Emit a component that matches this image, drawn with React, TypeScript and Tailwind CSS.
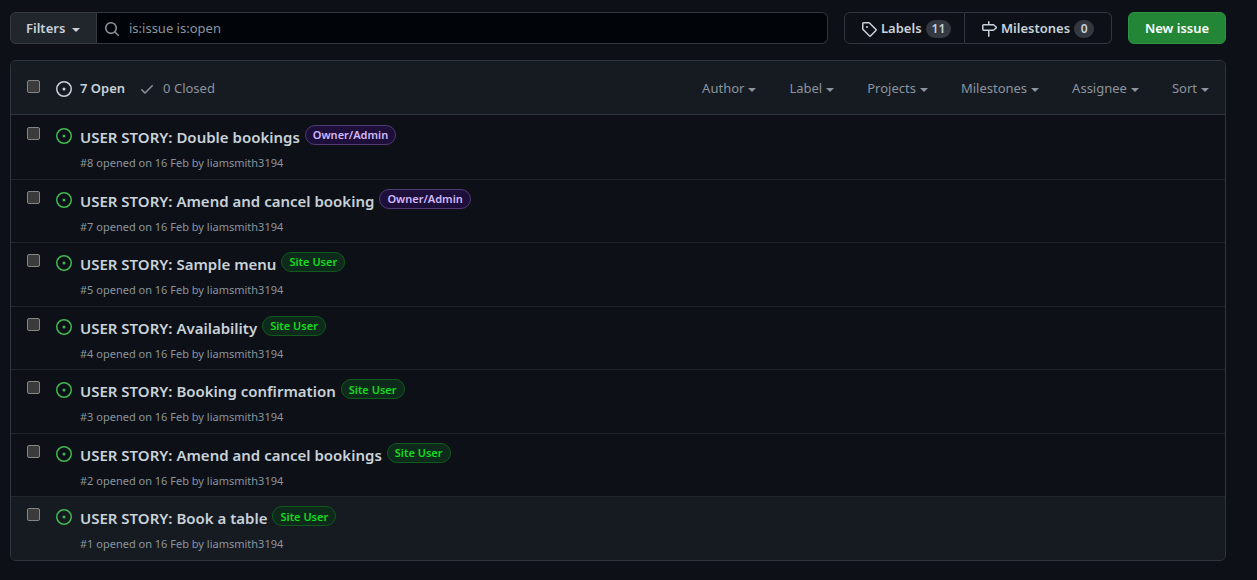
import type { ReactNode } from "react";

const paths = {
  open: "M8 9.5a1.5 1.5 0 100-3 1.5 1.5 0 000 3zM8 0a8 8 0 100 16A8 8 0 008 0zM1.5 8a6.5 6.5 0 1113 0 6.5 6.5 0 01-13 0z",
  search:
    "M11.5 7a4.499 4.499 0 11-8.998 0A4.499 4.499 0 0111.5 7zm-.82 4.74a6 6 0 111.06-1.06l3.04 3.04a.75.75 0 11-1.06 1.06l-3.04-3.04z",
  tag: "M2.5 7.775V2.75a.25.25 0 01.25-.25h5.025a.25.25 0 01.177.073l6.25 6.25a.25.25 0 010 .354l-5.025 5.025a.25.25 0 01-.354 0l-6.25-6.25a.25.25 0 01-.073-.177zm-1.5 0V2.75C1 1.784 1.784 1 2.75 1h5.025c.464 0 .91.184 1.238.513l6.25 6.25a1.75 1.75 0 010 2.474l-5.026 5.026a1.75 1.75 0 01-2.474 0l-6.25-6.25A1.75 1.75 0 011 7.775zM6 5a1 1 0 100 2 1 1 0 000-2z",
  milestone:
    "M7.75 0a.75.75 0 01.75.75V3h3.634c.414 0 .814.147 1.13.414l2.07 1.75a1.75 1.75 0 010 2.672l-2.07 1.75a1.75 1.75 0 01-1.13.414H8.5v5.25a.75.75 0 11-1.5 0V10H2.75A1.75 1.75 0 011 8.25v-3.5C1 3.784 1.784 3 2.75 3H7V.75A.75.75 0 017.75 0zm0 8.5h4.384a.25.25 0 00.161-.06l2.07-1.75a.25.25 0 000-.38l-2.07-1.75a.25.25 0 00-.161-.06H2.75a.25.25 0 00-.25.25v3.5c0 .138.112.25.25.25h5z",
  check:
    "M13.78 4.22a.75.75 0 010 1.06l-7.25 7.25a.75.75 0 01-1.06 0L2.22 9.28a.75.75 0 011.06-1.06L6 10.94l6.72-6.72a.75.75 0 011.06 0z",
};

function Icon({ name, className = "" }: { name: keyof typeof paths; className?: string }) {
  return (
    <svg viewBox="0 0 16 16" fill="currentColor" fillRule="evenodd" aria-hidden="true" className={`size-4 shrink-0 ${className}`}>
      <path d={paths[name]} />
    </svg>
  );
}

function Caret() {
  return (
    <svg viewBox="0 0 8 4" fill="currentColor" aria-hidden="true" className="mt-0.5 h-1 w-2 shrink-0">
      <path d="M0 0h8L4 4z" />
    </svg>
  );
}

function Checkbox({ label }: { label: string }) {
  return (
    <input
      type="checkbox"
      aria-label={label}
      className="block size-[13px] shrink-0 appearance-none rounded-[2px] border border-[#858585] bg-[#3b3b3b] checked:bg-[#58a6ff]"
    />
  );
}

function Counter({ children }: { children: ReactNode }) {
  return (
    <span className="flex h-[18px] min-w-5 items-center justify-center rounded-full bg-[#343941] px-1.5 text-xs font-semibold">
      {children}
    </span>
  );
}

const pillStyles = {
  "Owner/Admin": "border-[#513b76] bg-[#1d0f3a] text-[#d2b8fb]",
  "Site User": "border-[#0f5a1c] bg-[#0e2a1a] text-[#12dd1f]",
};

type Issue = { id: number; title: string; label: keyof typeof pillStyles };

const issues: Issue[] = [
  { id: 8, title: "USER STORY: Double bookings", label: "Owner/Admin" },
  { id: 7, title: "USER STORY: Amend and cancel booking", label: "Owner/Admin" },
  { id: 5, title: "USER STORY: Sample menu", label: "Site User" },
  { id: 4, title: "USER STORY: Availability", label: "Site User" },
  { id: 3, title: "USER STORY: Booking confirmation", label: "Site User" },
  { id: 2, title: "USER STORY: Amend and cancel bookings", label: "Site User" },
  { id: 1, title: "USER STORY: Book a table", label: "Site User" },
];

const menus = ["Author", "Label", "Projects", "Milestones", "Assignee", "Sort"];

function IssueRow({ issue }: { issue: Issue }) {
  return (
    <li className="flex border-t border-[#21262d] px-4 first:border-transparent last:bg-[#161b22]">
      <div className="pt-[11px]">
        <Checkbox label={`Select issue ${issue.id}`} />
      </div>
      <Icon name="open" className="mt-3 ml-4 text-[#3fb950]" />
      <div className="ml-2 min-w-0 pt-[9px]">
        <div className="flex items-start gap-[5px]">
          <a href={`#${issue.id}`} className="text-[15px] leading-6 font-semibold text-[#c9d1d9]">
            {issue.title}
          </a>
          <a
            href="#labels"
            className={`flex h-5 shrink-0 items-center rounded-full border px-[7px] pt-px text-[11px] font-semibold ${pillStyles[issue.label]}`}
          >
            {issue.label}
          </a>
        </div>
        <p className="mt-1 text-[11px] leading-5 text-[#8b949e]">
          #{issue.id} opened on 16 Feb by <a href="#author">liamsmith3194</a>
        </p>
      </div>
    </li>
  );
}

export default function App() {
  return (
    <main className="min-h-screen bg-[#0d1117] pt-3 pr-[31px] pb-5 pl-2.5 font-['Noto_Sans','Open_Sans',sans-serif] text-[13px] text-[#c9d1d9]">
      <div className="flex h-8 gap-4">
        <form className="flex min-w-0 flex-1" onSubmit={(e) => e.preventDefault()}>
          <button type="button" className="flex w-[87px] shrink-0 items-center gap-[7px] rounded-l-md border border-[#363b42] bg-[#21262d] pt-px pl-[15px] font-semibold">
            Filters
            <Caret />
          </button>
          <label className="flex min-w-0 flex-1 items-center gap-[9px] rounded-r-md border border-l-0 border-[#30363d] bg-[#010409] px-[7px] pt-px text-[#8b949e]">
            <Icon name="search" />
            <input type="text" aria-label="Search all issues" defaultValue="is:issue is:open" className="min-w-0 flex-1 bg-transparent outline-none" />
          </label>
        </form>
        <nav className="flex font-semibold">
          <a href="#labels" className="flex w-[121px] items-center gap-1 rounded-l-md border border-[#30363d] pt-px pl-4">
            <Icon name="tag" />
            Labels
            <Counter>11</Counter>
          </a>
          <a href="#milestones" className="flex w-[147px] items-center gap-1 rounded-r-md border border-l-0 border-[#30363d] pt-px pl-4">
            <Icon name="milestone" />
            Milestones
            <Counter>0</Counter>
          </a>
        </nav>
        <a href="#new" className="flex w-[98px] items-center justify-center rounded-md border border-[#2f9143] bg-[#238636] pt-px font-semibold text-white">
          New issue
        </a>
      </div>

      <section className="mt-4 overflow-hidden rounded-md border border-[#30363d]">
        <header className="flex h-[54px] items-center border-b border-[#30363d] bg-[#161b22] px-4 pt-0.5">
          <div className="pb-1">
            <Checkbox label="Select all issues" />
          </div>
          <a href="#open" className="ml-4 flex items-center gap-2 font-semibold">
            <Icon name="open" />7 Open
          </a>
          <a href="#closed" className="ml-3.5 flex items-center gap-2 text-[#8b949e]">
            <Icon name="check" />0 Closed
          </a>
          <div className="ml-auto flex gap-[33px] text-[#8b949e]">
            {menus.map((m) => (
              <button key={m} type="button" className="flex items-center gap-1">
                {m}
                <Caret />
              </button>
            ))}
          </div>
        </header>
        <ul className="grid min-h-[445px] auto-rows-fr">
          {issues.map((issue) => (
            <IssueRow key={issue.id} issue={issue} />
          ))}
        </ul>
      </section>
    </main>
  );
}
